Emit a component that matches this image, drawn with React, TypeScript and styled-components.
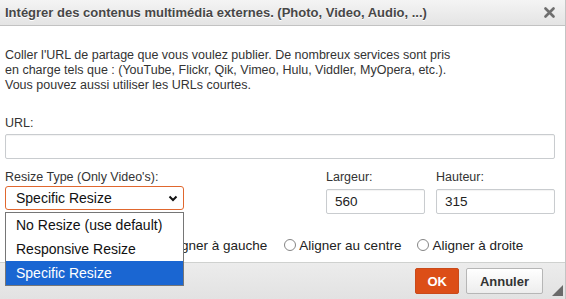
import React from "react";
import styled, {createGlobalStyle} from "styled-components";

const GlobalStyle = createGlobalStyle`
  html, body {
    margin: 0;
    padding: 0;
    background: #ffffff;
  }
  body {
    font-family: "Liberation Sans", Arial, sans-serif;
    font-size: 12.5px;
    color: #333333;
  }
`;

const Dialog = styled.div`
  width: 566px;
  height: 299px;
  display: flex;
  flex-direction: column;
  box-sizing: border-box;
  border-right: 1px solid #c4c4c4;
  background: #ffffff;
  position: relative;
  overflow: hidden;
`;

const Header = styled.div`
  height: 25px;
  flex: none;
  display: flex;
  align-items: center;
  justify-content: space-between;
  padding: 0 10px 0 5px;
  background: linear-gradient(to bottom, #f4f4f4, #e4e4e4);
  border-bottom: 1px solid #c2c2c2;
`;

const Title = styled.div`
  font-size: 13px;
  font-weight: bold;
  color: #474747;
  text-shadow: 0 1px 0 #ffffff;
`;

const Body = styled.div`
  flex: 1;
  padding: 22px 10px 0 5px;
  position: relative;
`;

const Intro = styled.p`
  margin: 0;
  line-height: 15px;
  color: #333333;
`;

const Label = styled.div<{ gap?: number }>`
  line-height: 15px;
  color: #333333;
  margin-bottom: ${(p) => p.gap ?? 3}px;
`;

const TextInput = styled.div<{ w?: number; h?: number }>`
  box-sizing: border-box;
  width: ${(p) => (p.w ? `${p.w}px` : "100%")};
  height: ${(p) => p.h ?? 25}px;
  border: 1px solid #c9cccf;
  border-radius: 2px;
  box-shadow: inset 0 1px 1px rgba(0, 0, 0, 0.05);
  padding: 0 8px;
  display: flex;
  align-items: center;
  font-size: 13.5px;
  color: #222222;
`;

const UrlBlock = styled.div`
  margin-top: 23px;
`;

const ResizeRow = styled.div`
  display: flex;
  margin-top: 11px;
`;

const Field = styled.div<{ w: number; ml?: number }>`
  width: ${(p) => p.w}px;
  margin-left: ${(p) => p.ml ?? 0}px;
  display: flex;
  flex-direction: column;
`;

const SelectWrap = styled.div`
  position: relative;
  width: 179px;
`;

const SelectBox = styled.div`
  box-sizing: border-box;
  height: 24px;
  border: 1px solid #e0672e;
  border-radius: 3px;
  display: flex;
  align-items: center;
  justify-content: space-between;
  padding: 0 5px 0 10px;
  font-size: 14px;
  color: #111111;
`;

const OptionList = styled.div`
  position: absolute;
  top: 26px;
  left: 0;
  width: 179px;
  box-sizing: border-box;
  border: 1px solid #767676;
  background: #ffffff;
  z-index: 5;
`;

const Option = styled.div<{ selected?: boolean }>`
  height: 24px;
  display: flex;
  align-items: center;
  padding-left: 10px;
  font-size: 14px;
  color: ${(p) => (p.selected ? "#ffffff" : "#111111")};
  background: ${(p) => (p.selected ? "#1a66d2" : "transparent")};
`;

const RadioRow = styled.div`
  display: flex;
  align-items: center;
  margin-top: 21px;
  height: 20px;
`;

const RadioItem = styled.label<{ ml?: number }>`
  display: flex;
  align-items: center;
  margin-left: ${(p) => p.ml ?? 0}px;
  font-size: 13.5px;
  color: #222222;
`;

const RadioDot = styled.span`
  width: 10px;
  height: 10px;
  border: 1px solid #858585;
  border-radius: 50%;
  margin-right: 3px;
  background: #ffffff;
`;

const Footer = styled.div`
  height: 36px;
  flex: none;
  display: flex;
  align-items: center;
  justify-content: flex-end;
  padding-right: 22px;
  gap: 7px;
  background: linear-gradient(to bottom, #ececec, #e2e2e2);
  border-top: 1px solid #cfd1cf;
  position: relative;
`;

const Button = styled.div<{ primary?: boolean }>`
  box-sizing: border-box;
  height: 26px;
  padding: 0 ${(p) => (p.primary ? 11 : 13)}px;
  display: flex;
  align-items: center;
  border-radius: 2px;
  font-weight: bold;
  font-size: 13px;
  color: ${(p) => (p.primary ? "#ffffff" : "#333333")};
  background: ${(p) =>
    p.primary ? "#dc4e17" : "linear-gradient(to bottom, #ffffff, #ededed)"};
  border: 1px solid ${(p) => (p.primary ? "#c94a1a" : "#b6b6b6")};
`;

const Grip = styled.svg`
  position: absolute;
  right: 2px;
  bottom: 3px;
`;

const Chevron = () => (
  <svg width="10" height="7" viewBox="0 0 10 7">
    <path d="M1.5 1.5 L5 5 L8.5 1.5" fill="none" stroke="#111" strokeWidth="2"/>
  </svg>
);

const CloseIcon = () => (
  <svg width="11" height="11" viewBox="0 0 11 11">
    <path d="M1.5 1.5 L9.5 9.5 M9.5 1.5 L1.5 9.5" stroke="#6f6f6f" strokeWidth="2.6" strokeLinecap="round"/>
  </svg>
);

export default function App() {
  return (
    <>
      <GlobalStyle/>
      <Dialog>
        <Header>
          <Title>Intégrer des contenus multimédia externes. (Photo, Video, Audio, ...)</Title>
          <CloseIcon/>
        </Header>
        <Body>
          <Intro>
            Coller l'URL de partage que vous voulez publier. De nombreux services sont pris
            <br/>
            en charge tels que : (YouTube, Flickr, Qik, Vimeo, Hulu, Viddler, MyOpera, etc.).
            <br/>
            Vous pouvez aussi utiliser les URLs courtes.
          </Intro>
          <UrlBlock>
            <Label>URL:</Label>
            <TextInput/>
          </UrlBlock>
          <ResizeRow>
            <Field w={179}>
              <Label gap={1}>Resize Type (Only Video's):</Label>
              <SelectWrap>
                <SelectBox>
                  Specific Resize
                  <Chevron/>
                </SelectBox>
                <OptionList>
                  <Option>No Resize (use default)</Option>
                  <Option>Responsive Resize</Option>
                  <Option selected>Specific Resize</Option>
                </OptionList>
              </SelectWrap>
            </Field>
            <Field w={99} ml={142}>
              <Label gap={4}>Largeur:</Label>
              <TextInput w={99}>560</TextInput>
            </Field>
            <Field w={119} ml={11}>
              <Label gap={4}>Hauteur:</Label>
              <TextInput w={119}>315</TextInput>
            </Field>
          </ResizeRow>
          <RadioRow>
            <RadioItem ml={146}><RadioDot/>Aligner à gauche</RadioItem>
            <RadioItem ml={17}><RadioDot/>Aligner au centre</RadioItem>
            <RadioItem ml={16}><RadioDot/>Aligner à droite</RadioItem>
          </RadioRow>
        </Body>
        <Footer>
          <Button primary>OK</Button>
          <Button>Annuler</Button>
          <Grip width="11" height="11" viewBox="0 0 11 11">
            <path d="M11 0 L11 11 L0 11 Z" fill="#6a6a6a"/>
          </Grip>
        </Footer>
      </Dialog>
    </>
  );
}
